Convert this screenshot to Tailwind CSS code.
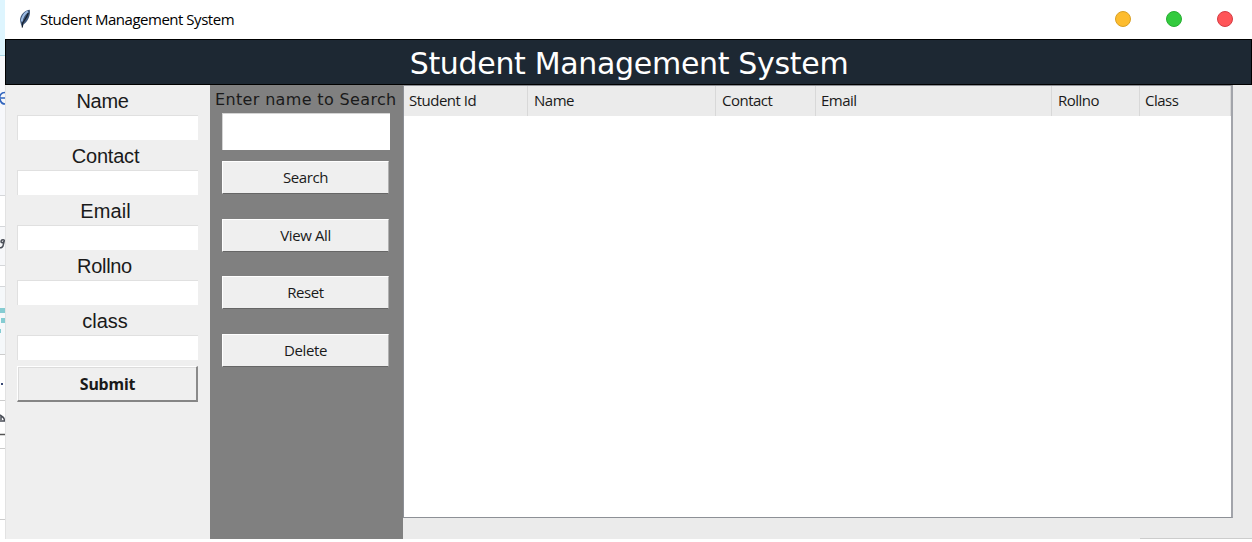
<!DOCTYPE html>
<html lang="en">
<head>
<meta charset="utf-8">
<title>Student Management System</title>
<script src="https://cdn.jsdelivr.net/npm/@tailwindcss/browser@4"></script>
</head>
<body class="w-[1252px] h-[542px] overflow-hidden bg-white text-[#1a1a1a]">
<div class="flex h-[539px] w-[1252px]">
  <!-- page behind the window -->
  <svg class="h-[539px] w-[5px] shrink-0 overflow-hidden" viewBox="0 0 5 539">
    <rect width="5" height="539" fill="#fff"/>
    <rect width="5" height="55" fill="#def5fe"/><rect y="55" width="5" height="1" fill="#add8e6"/>
    <rect y="56" width="5" height="139" fill="#f7f8fb"/><rect y="195" width="5" height="1" fill="#d5d7da"/>
    <rect y="226" width="5" height="1" fill="#d5d7da"/><rect y="227" width="5" height="38" fill="#f7f8fa"/><rect y="265" width="5" height="1" fill="#d5d7da"/>
    <rect y="286" width="5" height="1" fill="#d5d7da"/><rect y="287" width="5" height="67" fill="#f5f8fa"/><rect y="354" width="5" height="1" fill="#ccc"/>
    <path d="M0 308h5v5h-5zM1 318h4v5h-4zM0 329h1v4h-1z" fill="#85ccd2"/>
    <path d="M0 400.500h5M0 448.500h5M0 519.500h5" stroke="#ccc"/>
    <path d="M0 434.500h5" stroke="#555" stroke-width="1.500"/>
    <rect y="383" x="1" width="2" height="2" fill="#3b4a75"/>
    <path d="M5 92.500Q0 92.500-.5 98H5M0 99Q1 104 5 104" stroke="#3265bd" stroke-width="1.600" fill="none"/>
    <path d="M4.500 240Q1 239 1 242Q3 244 4.500 240L3 246Q1 249-1 247" stroke="#4b4f58" stroke-width="1.500" fill="none"/>
    <path d="M0 415Q5 418 4.500 421H0M1 416V420" stroke="#4b4f58" stroke-width="1.500" fill="none"/>
  </svg>
  <div class="flex w-[1247px] flex-col">
    <header class="flex h-[39px] items-center bg-white">
      <svg class="mb-[2px] ml-[12px] h-5 w-4 shrink-0" viewBox="0 0 16 20">
        <path d="M12.800 0.800C8 1.200 3.200 5.500 3 11.500L4 15.500 5.400 18.500 6.500 15.500C11 12.500 13.800 6.500 12.800 0.800Z" fill="#3d5679"/>
        <path d="M10.800 2.300C7.500 4.500 5.200 8 4.600 12.500" stroke="#9dbce4" stroke-width="2" fill="none"/>
        <path d="M11.300 4C10 8 7.500 11 5.700 14L5.300 18.500" stroke="#17202c" stroke-width="1.200" fill="none"/>
      </svg>
      <span class="mb-[2px] ml-[7px] w-[200px] whitespace-nowrap font-['Open_Sans','Noto_Sans',sans-serif] text-[15px] leading-5 tracking-[-0.480px] text-black">Student Management System</span>
      <div class="mr-[19px] mb-px ml-auto flex gap-[35px]">
        <i class="size-4 rounded-full border border-[#d9a024] bg-[#fdbc2e]"></i>
        <i class="size-4 rounded-full border border-[#27ae32] bg-[#33cb3e]"></i>
        <i class="size-4 rounded-full border border-[#d53c43] bg-[#ff5558]"></i>
      </div>
    </header>
    <h1 class="flex h-[46px] justify-center border border-black bg-[#1d2833] pl-px font-['DejaVu_Sans',sans-serif] text-[30px] leading-[48px] tracking-[-0.320px] whitespace-nowrap text-white"><span>Student Management System</span></h1>
    <main class="flex h-[454px]">
      <form class="flex w-[205px] flex-col border-l border-[#e2e2e2] bg-[#efefef] pr-3 pl-[11px] text-center font-['Liberation_Sans',sans-serif] text-[20px]">
        <label class="h-[30px] pr-[10px] leading-[32px] tracking-[-0.300px]">Name</label><span class="h-[25px] border-t border-l border-[#e0e0e0] bg-white"></span>
        <label class="h-[30px] pr-[4px] leading-[32px] tracking-[-0.200px]">Contact</label><span class="h-[25px] border-t border-l border-[#e0e0e0] bg-white"></span>
        <label class="h-[30px] pr-[4px] leading-[32px] tracking-[0.100px]">Email</label><span class="h-[25px] border-t border-l border-[#e0e0e0] bg-white"></span>
        <label class="h-[30px] pr-[6px] leading-[32px] tracking-[-0.300px]">Rollno</label><span class="h-[25px] border-t border-l border-[#e0e0e0] bg-white"></span>
        <label class="h-[30px] pr-[5px] leading-[32px]">class</label><span class="h-[25px] border-t border-l border-[#e0e0e0] bg-white"></span>
        <button type="button" class="mt-[6px] h-[36px] border-t border-r-2 border-b-2 border-l border-t-white border-r-[#8a8a8a] border-b-[#858585] border-l-white bg-[#efefef] font-['Noto_Sans',sans-serif] text-[16px] leading-[33px] font-bold tracking-[-0.200px]"><span class="block h-full border-t border-l border-[#dcdcdc]">Submit</span></button>
      </form>
      <section class="flex w-[193px] flex-col bg-[#808080] pr-[14px] pl-3 font-['Open_Sans','Noto_Sans',sans-serif] text-[15px] tracking-[-0.400px]">
        <label class="-ml-[7px] h-[28px] font-['DejaVu_Sans',sans-serif] text-[16px] leading-[30px] tracking-[0.350px] whitespace-nowrap">Enter name to Search</label>
        <span class="h-[37px] w-[168px] border-t border-l border-[#d4d4d4] bg-white"></span>
        <div class="mt-[11px] flex flex-col gap-[24.500px]">
          <button type="button" class="h-[33px] border border-t-white border-r-[#b0b0b0] border-b-[#666] border-l-white bg-[#efefef] leading-[31px]">Search</button>
          <button type="button" class="h-[33px] border border-t-white border-r-[#b0b0b0] border-b-[#666] border-l-white bg-[#efefef] pb-px leading-[30px]">View All</button>
          <button type="button" class="h-[33px] border border-t-white border-r-[#b0b0b0] border-b-[#666] border-l-white bg-[#efefef] leading-[31px]">Reset</button>
          <button type="button" class="h-[33px] border border-t-white border-r-[#b0b0b0] border-b-[#666] border-l-white bg-[#efefef] pb-px leading-[30px]">Delete</button>
        </div>
      </section>
      <section class="grow bg-[#ebebeb]">
        <div class="h-[433px] w-[830px] border border-r-2 border-[#8d9096] border-r-[#a2a4aa] bg-white">
          <div class="grid h-[30px] grid-cols-[124px_188px_100px_236px_88px_91px] bg-[#ebebeb] font-['Open_Sans','Noto_Sans',sans-serif] text-[15px] leading-[28px] tracking-[-0.500px]">
            <span class="border-r border-[#d8d8d8] pl-[5px]">Student Id</span><span class="border-r border-[#d8d8d8] pl-[6px]">Name</span><span class="border-r border-[#d8d8d8] pl-[6px]">Contact</span><span class="border-r border-[#d8d8d8] pl-[5px]">Email</span><span class="border-r border-[#d8d8d8] pl-[6px]">Rollno</span><span class="border-r border-[#d8d8d8] pl-[5px]">Class</span>
          </div>
        </div>
        <div class="mt-5 ml-auto h-px w-[112px] bg-[#ccc]"></div>
      </section>
    </main>
  </div>
</div>
</body>
</html>
